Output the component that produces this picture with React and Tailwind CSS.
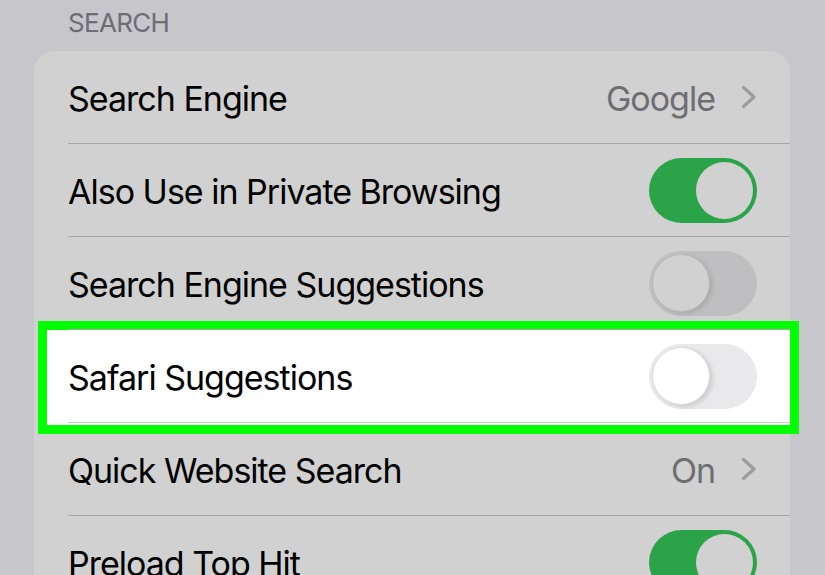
import React from 'react';

const font = { fontFamily: 'Inter, "Liberation Sans", sans-serif' };

function Chevron() {
  return (
    <svg width="16" height="24" viewBox="0 0 16 24" className="ml-[26px]">
      <polyline
        points="2.5,2.5 13,12 2.5,21.5"
        fill="none"
        stroke="#9c9ca0"
        strokeWidth="3.2"
        strokeLinecap="round"
        strokeLinejoin="round"
      />
    </svg>
  );
}

function Toggle({ on, light }) {
  if (on) {
    return (
      <div className="flex h-[65px] w-[108px] items-center justify-end rounded-full bg-[#2ba349] pr-[4px]">
        <div className="h-[57px] w-[57px] rounded-full bg-[#d1d1d1]" />
      </div>
    );
  }
  return (
    <div
      className={
        light
          ? 'flex h-[65px] w-[108px] items-center rounded-full bg-[#e9e9eb] pl-[3px]'
          : 'flex h-[65px] w-[108px] items-center rounded-full bg-[#bfbfc1] pl-[3px]'
      }
    >
      <div
        className={
          light
            ? 'h-[58px] w-[58px] rounded-full border border-[#dcdcde] bg-white shadow-[3px_2px_4px_rgba(0,0,0,0.12)]'
            : 'h-[58px] w-[58px] rounded-full border border-[#b8b8ba] bg-[#d1d1d1] shadow-[3px_2px_4px_rgba(0,0,0,0.1)]'
        }
      />
    </div>
  );
}

function Row({ label, value, toggle, light }) {
  return (
    <div className="flex h-[93px] pl-[34px]">
      <div
        className={
          light
            ? 'relative z-10 flex flex-1 items-center border-b border-[#c8c8cb] pr-[33px]'
            : 'relative z-10 flex flex-1 items-center border-b border-[#a6a6a8] pr-[33px]'
        }
      >
        <span className="mt-[4px] flex-1 text-[34px] leading-none tracking-[-1px] text-black">{label}</span>
        {value && (
          <div className="flex items-center">
            <span className="mt-[4px] text-[34px] leading-none tracking-[-1px] text-[#6e6e72]">{value}</span>
            <Chevron />
          </div>
        )}
        {toggle && <Toggle on={toggle === 'on'} light={light} />}
      </div>
    </div>
  );
}

export default function App() {
  return (
    <div className="h-[575px] w-[825px] overflow-hidden bg-[#c6c6cb]" style={font}>
      <div className="h-[51px] pl-[68px] pt-[10px] text-[26px] leading-none tracking-[-0.7px] text-[#6d6d72]">
        SEARCH
      </div>
      <div className="ml-[34px] w-[756px] rounded-t-[20px] bg-[#d1d1d1] pb-[40px]">
        <Row label="Search Engine" value="Google" />
        <Row label="Also Use in Private Browsing" toggle="on" />
        <Row label="Search Engine Suggestions" toggle="off" />
        <div className="relative">
          <div className="absolute -top-[9px] -bottom-[11px] left-[4px] -right-[9px] border-[9px] border-[#00ff00] bg-white" />
          <Row label="Safari Suggestions" toggle="off" light />
        </div>
        <Row label="Quick Website Search" value="On" />
        <Row label="Preload Top Hit" toggle="on" />
      </div>
    </div>
  );
}
